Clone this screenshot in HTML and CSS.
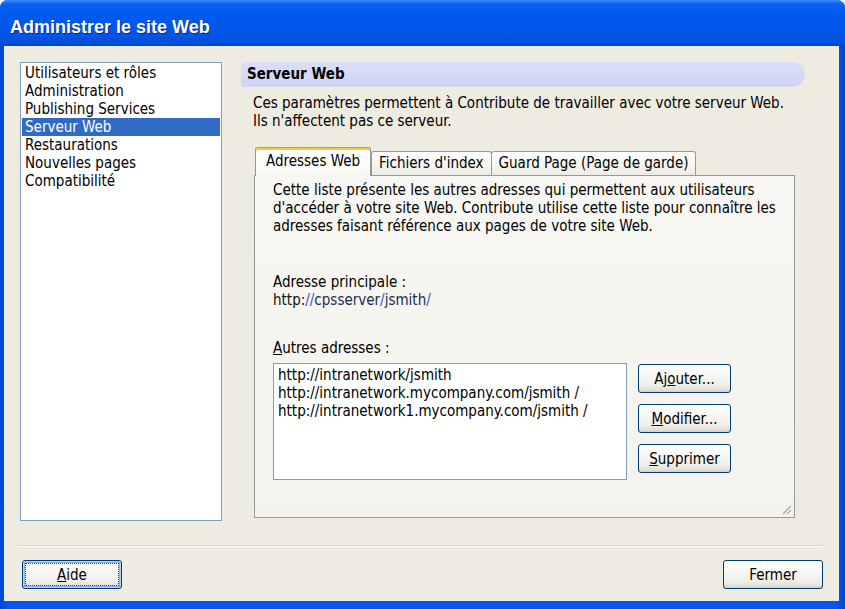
FILE: index.html
```html
<!DOCTYPE html>
<html lang="fr">
<head>
  <meta charset="UTF-8" />
  <title>Administrer le site Web</title>
  <link rel="stylesheet" href="styles.css">
</head>
<body>
  <div class="window">
    <div class="titlebar">Administrer le site Web</div>
    <div class="client">
      <div class="main">
        <ul class="nav">
          <li>Utilisateurs et rôles</li>
          <li>Administration</li>
          <li>Publishing Services</li>
          <li class="selected">Serveur Web</li>
          <li>Restaurations</li>
          <li>Nouvelles pages</li>
          <li>Compatibilité</li>
        </ul>

        <div class="pane">
          <div class="pane-head">Serveur Web</div>
          <p class="intro">Ces paramètres permettent à Contribute de travailler avec votre serveur Web.<br>Ils n'affectent pas ce serveur.</p>

          <div class="tabset">
            <div class="tabs">
              <div class="tab active">Adresses Web</div>
              <div class="tab">Fichiers d'index</div>
              <div class="tab">Guard Page (Page de garde)</div>
            </div>
            <div class="tabpage">
              <p class="desc">Cette liste présente les autres adresses qui permettent aux utilisateurs<br>d'accéder à votre site Web. Contribute utilise cette liste pour connaître les<br>adresses faisant référence aux pages de votre site Web.</p>
              <div class="label main-label">Adresse principale :</div>
              <div class="url">http:<span class="path"><i>//</i>cpsserver<i>/</i>jsmith<i>/</i></span></div>
              <div class="label other-label"><u>A</u>utres adresses :</div>
              <div class="addr-row">
                <div class="addr-list">
                  <div>http://intranetwork/jsmith</div>
                  <div>http://intranetwork.mycompany.com/jsmith /</div>
                  <div>http://intranetwork1.mycompany.com/jsmith /</div>
                </div>
                <div class="addr-buttons">
                  <button class="btn">Aj<u>o</u>uter...</button>
                  <button class="btn"><u>M</u>odifier...</button>
                  <button class="btn"><u>S</u>upprimer</button>
                </div>
              </div>
              <svg class="grip" width="12" height="12" viewBox="0 0 12 12">
                <path d="M11 3 L3 11 M11 7 L7 11" stroke="#a9a59a" stroke-width="1.2" fill="none"/>
                <path d="M12 4 L4 12 M12 8 L8 12" stroke="#fff" stroke-width="1" fill="none"/>
              </svg>
            </div>
          </div>
        </div>
      </div>

      <div class="separator"></div>

      <div class="footer">
        <button class="btn btn-wide btn-default"><u>A</u>ide</button>
        <button class="btn btn-wide">Fermer</button>
      </div>
    </div>
  </div>
</body>
</html>
```

FILE: styles.css
```css
* {
  box-sizing: border-box;
}
html, body {
  margin: 0;
}
body {
  width: 845px;
  height: 609px;
  overflow: hidden;
  background: #fff;
  font-family: "DejaVu Sans Condensed", "DejaVu Sans", sans-serif;
  font-stretch: condensed;
  font-size: 15px;
  color: #000;
}
.window {
  height: 609px;
  display: flex;
  flex-direction: column;
  background: linear-gradient(90deg, #0047d8, #0058ee 1%, #0058ee 99%, #0042c8);
  border-radius: 8px 8px 0 0;
}
.titlebar {
  height: 46px;
  padding: 8px 10px 0;
  display: flex;
  align-items: center;
  color: #fff;
  font-family: "Liberation Sans", Arial, sans-serif;
  font-stretch: normal;
  font-weight: bold;
  font-size: 18px;
  text-shadow: 1px 1px 0 #0b2a8e;
  background: linear-gradient(#3c8ef9 0, #0b62f0 9%, #005af0 30%, #0056e8 70%, #0050dc 92%, #0046cc 100%);
  border-radius: 8px 8px 0 0;
}
.client {
  flex: 1;
  margin: 0 6px 8px 4px;
  background: #eeebe0;
  display: flex;
  flex-direction: column;
}
.main {
  display: flex;
  padding: 16px 0 0 16px;
}

/* liste de gauche */
.nav {
  width: 202px;
  height: 459px;
  margin: 0;
  padding: 1px;
  list-style: none;
  background: #fff;
  border: 1px solid #7f9db9;
}
.nav li {
  height: 18px;
  line-height: 18px;
  padding-left: 3px;
  white-space: nowrap;
}
.nav li.selected {
  background: #316ac5;
  color: #fff;
}

/* panneau de droite */
.pane {
  width: 564px;
  margin-left: 19px;
}
.pane-head {
  height: 25px;
  line-height: 25px;
  padding-left: 6px;
  font-weight: bold;
  background: linear-gradient(#dbdff9, #cfd4f3);
  border-radius: 3px 13px 13px 3px;
}
.intro {
  margin: 7px 0 0 12px;
  line-height: 18px;
}
.tabset {
  width: 541px;
  margin: 17px 0 0 13px;
}
.tabs {
  display: flex;
  align-items: flex-end;
  height: 28px;
  padding-left: 1px;
}
.tab {
  height: 24px;
  line-height: 22px;
  padding: 0 7px;
  white-space: nowrap;
  border: 1px solid #919b9c;
  border-bottom: none;
  border-radius: 3px 3px 0 0;
  background: linear-gradient(#fff, #f7f6f2 50%, #ecebe6);
}
.tab + .tab {
  margin-left: -1px;
}
.tab.active {
  position: relative;
  z-index: 1;
  height: 29px;
  margin-bottom: -1px;
  padding: 0 10px;
  line-height: 26px;
  border-top: 1px solid #e68b2c;
  box-shadow: inset 0 2px 0 #ffc73c;
  background: linear-gradient(#fff 20%, #fcfcfa 60%, #f7f6f1);
}
.tab.active + .tab {
  margin-left: 0;
}
.tabpage {
  height: 343px;
  display: flex;
  flex-direction: column;
  padding: 5px 0 0 18px;
  border: 1px solid #919b9c;
  background: linear-gradient(#f8f7f3, #f3f2ec);
}
.desc {
  margin: 0;
  line-height: 18px;
}
.label, .url {
  line-height: 18px;
}
.main-label {
  margin-top: 38px;
}
.url {
  color: #111;
}
.url .path {
  color: #1d2b55;
}
.url i {
  font-style: normal;
  color: #2f5bd8;
}
.other-label {
  margin-top: 30px;
}
.addr-row {
  display: flex;
  margin-top: 6px;
}
.addr-list {
  width: 354px;
  height: 117px;
  padding: 2px 4px;
  line-height: 18px;
  background: #fff;
  border: 1px solid #7f9db9;
}
.addr-buttons {
  display: flex;
  flex-direction: column;
  gap: 11px;
  margin: 1px 0 0 11px;
}
.grip {
  margin: auto 2px 2px auto;
}

/* boutons */
.btn {
  width: 93px;
  height: 29px;
  padding: 0;
  font: inherit;
  color: #000;
  border: 1px solid #003c74;
  border-radius: 3px;
  background: linear-gradient(#fff, #f8f8f5 35%, #efeee9 75%, #dcd7cc);
  box-shadow: inset 0 -1px 0 #d6d0c5;
}
.btn-wide {
  width: 100px;
}
.btn-default {
  box-shadow: inset 0 0 0 1px #b9d1f4, inset 0 0 0 2px #8eaee6;
  outline: 1px dotted #444;
  outline-offset: -4px;
}

.separator {
  margin: 24px 16px 0 14px;
  border-top: 1px solid #d6d2c2;
  border-bottom: 1px solid #fff;
}
.footer {
  display: flex;
  justify-content: space-between;
  margin-top: 13px;
  padding: 0 16px 0 18px;
}
```
